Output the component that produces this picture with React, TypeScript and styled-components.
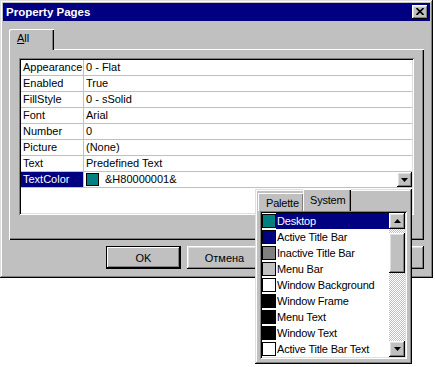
import React from "react";
import styled, { createGlobalStyle } from "styled-components";

const Global = createGlobalStyle`
  html, body { margin: 0; padding: 0; background: #fff; }
  body { font-family: "Liberation Sans", Arial, sans-serif; font-size: 11px; color: #000; }
  * { box-sizing: border-box; }
`;

const RAISED = `box-shadow: inset -1px -1px #000, inset 1px 1px #fff, inset -2px -2px #808080, inset 2px 2px #dfdfdf;`;

const Page = styled.div`
  width: 435px;
  height: 367px;
  background: #fff;
`;

const Window = styled.div`
  position: relative;
  width: 433px;
  height: 278px;
  background: #c0c0c0;
  padding: 3px;
  box-shadow: inset -1px -1px #000, inset 1px 1px #dfdfdf, inset -2px -2px #808080, inset 2px 2px #fff;
  display: flex;
  flex-direction: column;
`;

const TitleBar = styled.div`
  height: 18px;
  background: #000080;
  color: #fff;
  font-weight: bold;
  font-size: 11.5px;
  display: flex;
  align-items: center;
  justify-content: space-between;
  padding: 0 2px 0 3px;
`;

const CloseButton = styled.div`
  width: 16px;
  height: 14px;
  background: #c0c0c0;
  ${RAISED}
  display: flex;
  align-items: center;
  justify-content: center;
  padding-bottom: 1px;
  padding-right: 1px;
`;

const Body = styled.div`
  padding: 8px 6px 0 6px;
  display: flex;
  flex-direction: column;
`;

const TabStrip = styled.div`
  display: flex;
  height: 21px;
  margin-bottom: -1px;
  position: relative;
  z-index: 1;
`;

const MainTab = styled.div`
  width: 45px;
  height: 21px;
  padding: 3px 0 0 8px;
  line-height: 13px;
  background: #c0c0c0;
  border-top-left-radius: 2px;
  box-shadow: inset 1px 1px #fff, inset -1px 0 #000, inset -2px 0 #808080;
`;

const Panel = styled.div`
  height: 191px;
  padding: 9px 10px 0 10px;
  box-shadow: inset 1px 1px #fff, inset -1px -1px #000, inset -2px -2px #808080;
`;

const Grid = styled.div`
  height: 157px;
  background: #fff;
  padding: 2px;
  box-shadow: inset 1px 1px #808080, inset -1px -1px #fff, inset 2px 2px #000, inset -2px -2px #dfdfdf;
`;

const Row = styled.div`
  display: flex;
  height: 16px;
  border-bottom: 1px solid #c0c0c0;
`;

const NameCell = styled.div<{ $selected?: boolean }>`
  width: 63px;
  flex: none;
  border-right: 1px solid #c0c0c0;
  padding-left: 2px;
  line-height: 15px;
  white-space: nowrap;
  overflow: hidden;
  background: ${(p) => (p.$selected ? "#000080" : "transparent")};
  color: ${(p) => (p.$selected ? "#fff" : "#000")};
`;

const ValueCell = styled.div`
  flex: 1;
  display: flex;
  align-items: flex-start;
  padding-left: 2px;
  line-height: 15px;
  white-space: nowrap;
`;

const ValueSwatch = styled.span<{ $color: string }>`
  width: 13px;
  height: 13px;
  margin-top: 1px;
  margin-right: 6px;
  background: ${(p) => p.$color};
  border: 1px solid #000;
  flex: none;
`;

const DropButton = styled.div`
  margin-left: auto;
  width: 15px;
  height: 15px;
  background: #c0c0c0;
  ${RAISED}
  display: flex;
  align-items: center;
  justify-content: center;
`;

const ButtonRow = styled.div`
  display: flex;
  justify-content: flex-end;
  gap: 6px;
  margin-top: 6px;
`;

const Button = styled.div<{ $default?: boolean }>`
  width: 75px;
  height: 23px;
  display: flex;
  align-items: center;
  justify-content: center;
  background: #c0c0c0;
  ${(p) =>
    p.$default
      ? `box-shadow: inset 0 0 0 1px #000, inset -2px -2px #000, inset 2px 2px #fff, inset -3px -3px #808080;`
      : RAISED}
`;

const Popup = styled.div`
  position: absolute;
  left: 255px;
  top: 189px;
  width: 157px;
  height: 175px;
  z-index: 5;
  background: #c0c0c0;
  padding: 0 5px 5px 5px;
  box-shadow: inset -1px -1px #000, inset 1px 1px #dfdfdf, inset -2px -2px #808080, inset 2px 2px #fff;
  display: flex;
  flex-direction: column;
`;

const PopupTabs = styled.div`
  display: flex;
  align-items: flex-end;
  height: 22px;
  flex: none;
  margin-left: -2px;
`;

const PopupTab = styled.div<{ $active?: boolean; $w: number }>`
  width: ${(p) => p.$w}px;
  height: ${(p) => (p.$active ? 22 : 18)}px;
  padding: ${(p) => (p.$active ? "5px" : "4px")} 0 0 ${(p) => (p.$active ? 7 : 8)}px;
  line-height: 13px;
  font-size: 11px;
  letter-spacing: -0.2px;
  white-space: nowrap;
  overflow: hidden;
  background: #c0c0c0;
  box-shadow: ${(p) =>
    p.$active
      ? "inset 1px 1px #fff, inset -1px 0 #000, inset -2px 0 #808080"
      : "inset 1px 1px #fff, inset -1px 0 #808080"};
`;

const ListFrame = styled.div`
  height: 148px;
  flex: none;
  padding: 2px;
  background: #fff;
  display: flex;
  box-shadow: inset 1px 1px #808080, inset -1px -1px #fff, inset 2px 2px #000, inset -2px -2px #dfdfdf;
`;

const Items = styled.div`
  flex: 1;
  display: flex;
  flex-direction: column;
`;

const Item = styled.div`
  height: 16px;
  display: flex;
  align-items: flex-start;
  font-size: 11px;
  letter-spacing: -0.2px;
`;

const ItemSwatch = styled.span<{ $color: string }>`
  width: 14px;
  height: 14px;
  margin-top: 1px;
  flex: none;
  background: ${(p) => p.$color};
  border: 1px solid #000;
`;

const ItemLabel = styled.span<{ $selected?: boolean }>`
  flex: 1;
  height: 16px;
  line-height: 16px;
  padding-left: 1px;
  white-space: nowrap;
  overflow: hidden;
  background: ${(p) => (p.$selected ? "#000080" : "transparent")};
  color: ${(p) => (p.$selected ? "#fff" : "#000")};
`;

const ScrollBar = styled.div`
  width: 16px;
  display: flex;
  flex-direction: column;
  background-color: #fff;
  background-image: repeating-conic-gradient(#c0c0c0 0% 25%, #fff 0% 50%);
  background-size: 2px 2px;
`;

const ScrollButton = styled.div`
  width: 16px;
  height: 16px;
  flex: none;
  background: #c0c0c0;
  ${RAISED}
  display: flex;
  align-items: center;
  justify-content: center;
`;

const Thumb = styled.div`
  width: 16px;
  height: 40px;
  flex: none;
  margin-top: 4px;
  background: #c0c0c0;
  ${RAISED}
`;

const Track = styled.div`
  flex: 1;
`;

const Down = () => (
  <svg width="7" height="4" viewBox="0 0 7 4">
    <polygon points="0,0 7,0 3.5,4" fill="#000" />
  </svg>
);
const Up = () => (
  <svg width="7" height="4" viewBox="0 0 7 4">
    <polygon points="0,4 7,4 3.5,0" fill="#000" />
  </svg>
);

const props = [
  { name: "Appearance", value: "0 - Flat" },
  { name: "Enabled", value: "True" },
  { name: "FillStyle", value: "0 - sSolid" },
  { name: "Font", value: "Arial" },
  { name: "Number", value: "0" },
  { name: "Picture", value: "(None)" },
  { name: "Text", value: "Predefined Text" },
];

const systemColors = [
  { name: "Desktop", color: "#008080" },
  { name: "Active Title Bar", color: "#000080" },
  { name: "Inactive Title Bar", color: "#808080" },
  { name: "Menu Bar", color: "#c0c0c0" },
  { name: "Window Background", color: "#ffffff" },
  { name: "Window Frame", color: "#000000" },
  { name: "Menu Text", color: "#000000" },
  { name: "Window Text", color: "#000000" },
  { name: "Active Title Bar Text", color: "#ffffff" },
];

export default function App() {
  return (
    <Page>
      <Global />
      <Window>
        <TitleBar>
          <span>Property Pages</span>
          <CloseButton>
            <svg width="8" height="7" viewBox="0 0 8 7">
              <path d="M0.5 0 L7.5 7 M7.5 0 L0.5 7" stroke="#000" strokeWidth="1.6" />
            </svg>
          </CloseButton>
        </TitleBar>
        <Body>
          <TabStrip>
            <MainTab>
              <u>A</u>ll
            </MainTab>
          </TabStrip>
          <Panel>
            <Grid>
              {props.map((p) => (
                <Row key={p.name}>
                  <NameCell>{p.name}</NameCell>
                  <ValueCell>{p.value}</ValueCell>
                </Row>
              ))}
              <Row>
                <NameCell $selected>TextColor</NameCell>
                <ValueCell>
                  <ValueSwatch $color="#008080" />
                  &amp;H80000001&amp;
                  <DropButton>
                    <Down />
                  </DropButton>
                </ValueCell>
              </Row>
            </Grid>
          </Panel>
          <ButtonRow>
            <Button $default>OK</Button>
            <Button>Отмена</Button>
            <Button>Применить</Button>
            <Button>Справка</Button>
          </ButtonRow>
        </Body>
        <Popup>
          <PopupTabs>
            <PopupTab $w={45}>Palette</PopupTab>
            <PopupTab $w={48} $active>
              System
            </PopupTab>
          </PopupTabs>
          <ListFrame>
            <Items>
              {systemColors.map((c, i) => (
                <Item key={c.name}>
                  <ItemSwatch $color={c.color} />
                  <ItemLabel $selected={i === 0}>{c.name}</ItemLabel>
                </Item>
              ))}
            </Items>
            <ScrollBar>
              <ScrollButton>
                <Up />
              </ScrollButton>
              <Thumb />
              <Track />
              <ScrollButton>
                <Down />
              </ScrollButton>
            </ScrollBar>
          </ListFrame>
        </Popup>
      </Window>
    </Page>
  );
}
